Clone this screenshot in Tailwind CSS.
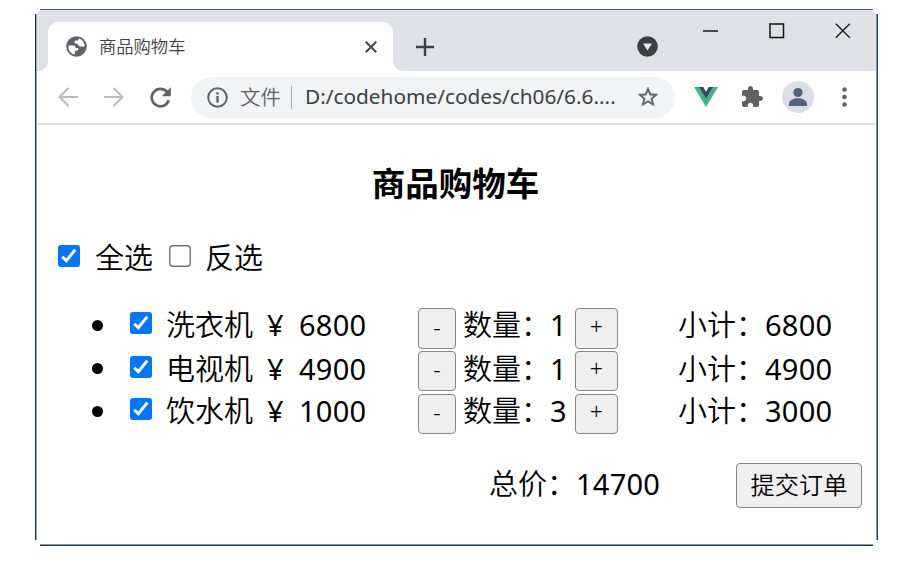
<!DOCTYPE html>
<html lang="zh-CN">
<head>
<meta charset="utf-8">
<title>商品购物车</title>
<script src="https://cdn.jsdelivr.net/npm/@tailwindcss/browser@4"></script>
</head>
<body class="bg-white w-[897px] h-[575px] overflow-hidden pl-[35px] pt-[9px] font-['Noto_Sans','Noto_Sans_CJK_SC',sans-serif] text-black">
<div class="relative w-[843px] h-[537px] flex flex-col px-0.5">
  <!-- window frame -->
  <div class="absolute left-[5px] right-[5px] top-0 h-px bg-[#4f575c]"></div>
  <div class="absolute left-[5px] right-[5px] bottom-0 h-0.5 border-t border-[#8493a0] bg-[#1e4358]"></div>
  <div class="absolute left-0 top-[5px] bottom-[6px] w-0.5 border-r border-[#9aabba] bg-[#16303f]"></div>
  <div class="absolute right-0 top-[5px] bottom-[6px] w-0.5 border-l border-[#7f9aad] bg-[#1d4459]"></div>

  <!-- tab strip -->
  <header class="mt-px h-[61px] shrink-0 flex bg-[#dee1e6] rounded-t-[5px]">
    <div class="w-[11px] flex items-end bg-white"><div class="size-full bg-[#dee1e6] rounded-br-[10px] rounded-tl-[5px]"></div></div>
    <div class="mt-3 w-[345px] rounded-t-[11px] bg-white flex items-center pl-[18px] pr-[16px]">
      <svg class="size-[21px]" viewBox="0 0 21 21"><circle cx="10.5" cy="10.5" r="10.3" fill="#5f6368"/><path d="M2.400 9.600H7c2 0 2.600 1 2.600 2.400h1.800c1.200 0 1.600 2.400 0 2.600-2 0-2.600.6-2.600 2v2C5 18 2 14.600 2.400 9.600zM12.800 2.500c-.2 1.600-1 2.100-2.600 2.100-1.200 0-1.600.6-1.600 1.600 0 1.200.8 1.400 2 1.400 1.600 0 1.600 2.400 3.200 3 1.400.4 2.800-.4 4.800.3C19 6.800 16.400 3.400 12.800 2.500z" fill="#fff"/></svg>
      <span class="ml-3 text-[17.3px] leading-6 text-[#3c4043] font-[350] whitespace-nowrap">商品购物车</span>
      <svg class="ml-auto size-3" viewBox="0 0 12 12" stroke="#4a4d51" stroke-width="2.2"><path d="M.8.8l10.4 10.4M11.2.8L.8 11.2"/></svg>
    </div>
    <div class="flex-1 bg-white"><div class="size-full bg-[#dee1e6] rounded-bl-[10px] rounded-tr-[5px] flex">
      <svg class="ml-[23px] mt-[28px] size-[18px]" viewBox="0 0 18 18" stroke="#3c4043" stroke-width="2.4"><path d="M9 0v18M0 9h18"/></svg>
      <svg class="ml-[203px] mt-[26px] size-[21px]" viewBox="0 0 21 21"><circle cx="10.5" cy="10.5" r="10.3" fill="#3c4043"/><path d="M6 7.5h9l-4.5 7z" fill="#e8eaed"/></svg>
      <svg class="ml-[45px] mt-[20px] w-[15px] h-[2px]" viewBox="0 0 15 2"><path d="M0 1h15" stroke="#222" stroke-width="1.6"/></svg>
      <svg class="ml-[51px] mt-[13px] size-[16px]" viewBox="0 0 16 16"><rect x="1" y="1" width="13.5" height="13.5" fill="none" stroke="#111" stroke-width="1.5"/></svg>
      <svg class="ml-[50px] mt-[13px] size-[16px]" viewBox="0 0 16 16" stroke="#222" stroke-width="1.5"><path d="M.8.8l14 14M14.8.8l-14 14"/></svg>
    </div></div>
  </header>

  <!-- toolbar -->
  <nav class="h-[54px] shrink-0 flex items-center border-b-2 border-[#dfe1e5] pl-[21px] text-[22px]">
    <svg class="size-[20px]" viewBox="0 0 20 20" fill="none" stroke="#babcbe" stroke-width="2.2"><path d="M20 10H1.5M10.5 1L1.5 10l9 9"/></svg>
    <svg class="ml-[26px] size-[20px]" viewBox="0 0 20 20" fill="none" stroke="#babcbe" stroke-width="2.2"><path d="M0 10h18.5M9.500 1l9 9-9 9"/></svg>
    <svg class="ml-[26px] size-[21px]" viewBox="0 0 21 21"><path d="M17.300 5.200A8.700 8.700 0 1 0 18.700 13.300" fill="none" stroke="#5f6368" stroke-width="2.700"/><path d="M20.800.3v9h-9z" fill="#5f6368"/></svg>
    <div class="ml-[20px] w-[484px] h-[41px] rounded-full bg-[#f1f3f4] flex items-center pl-[16px]">
      <svg class="size-[21px] shrink-0" viewBox="0 0 21 21"><circle cx="10.500" cy="10.500" r="9.300" fill="none" stroke="#5f6368" stroke-width="2"/><path d="M10.500 9v6.500M10.500 5.200v2.300" stroke="#5f6368" stroke-width="2.400"/></svg>
      <span class="ml-[12px] w-[51px] shrink-0 text-[20.500px] text-[#5f6368] font-[350] whitespace-nowrap">文件</span>
      <span class="w-px h-[23px] shrink-0 bg-[#a9acb0]"></span>
      <span class="ml-[13px] w-[312px] shrink-0 text-[20.800px] text-[#3c4043] whitespace-nowrap">D:/codehome/codes/ch06/6.6....</span>
      <svg class="ml-[19px] size-[24px] shrink-0" viewBox="0 0 24 24" fill="#5f6368" stroke="#5f6368" stroke-width=".4"><path d="M22 9.240l-7.190-.62L12 2 9.190 8.630 2 9.240l5.460 4.730L5.820 21 12 17.270 18.180 21l-1.630-7.030L22 9.240zM12 15.400l-3.760 2.270 1-4.280-3.320-2.880 4.380-.38L12 6.100l1.710 4.040 4.380.38-3.320 2.880 1 4.280L12 15.400z"/></svg>
    </div>
    <svg class="ml-[19px] w-[24px] h-[20px]" viewBox="0 0 24 20"><path d="M0 0h4.800L12 12 19.200 0H24L12 20z" fill="#41b883"/><path d="M4.800 0h4.400L12 4.800 14.800 0h4.400L12 12z" fill="#35495e"/></svg>
    <svg class="ml-[22px] size-[24px]" viewBox="0 0 24 24" fill="#5f6368"><path d="M20.500 11H19V7c0-1.100-.9-2-2-2h-4V3.500C13 2.120 11.880 1 10.500 1S8 2.120 8 3.500V5H4c-1.100 0-1.990.9-1.990 2v3.800H3.500c1.490 0 2.700 1.210 2.700 2.700s-1.210 2.700-2.700 2.700H2V20c0 1.100.9 2 2 2h3.800v-1.500c0-1.490 1.210-2.700 2.700-2.700 1.490 0 2.700 1.210 2.700 2.700V22H17c1.100 0 2-.9 2-2v-4h1.500c1.380 0 2.500-1.120 2.500-2.500S21.880 11 20.500 11z"/></svg>
    <svg class="ml-[18px] size-[32px]" viewBox="0 0 32 32"><circle cx="16" cy="16" r="16" fill="#dadee5"/><g fill="#56627a"><circle cx="16" cy="11.500" r="4.600"/><path d="M7 25v-2.500c0-3.300 5-5.300 9-5.300s9 2 9 5.300V25z"/></g></svg>
    <svg class="ml-[28px] w-[5px] h-[20px]" viewBox="0 0 5 20" fill="#5f6368"><circle cx="2.500" cy="2.500" r="2.300"/><circle cx="2.500" cy="10" r="2.300"/><circle cx="2.500" cy="17.500" r="2.300"/></svg>
  </nav>

  <!-- page -->
  <main class="flex-1 text-[29px] leading-[42px] tracking-[0.25px] whitespace-nowrap">
    <h1 class="mt-[37px] pr-0.5 text-center font-bold text-[33.500px] leading-[42px] tracking-normal">商品购物车</h1>
    <div class="mt-[32px] h-[44px] flex items-center pl-[21px] font-[350] tracking-normal">
      <svg class="size-[22px] -mt-1" viewBox="0 0 22 22"><rect width="22" height="22" rx="3" fill="#0075ff"/><path d="M4.300 11.700l4 4L17.300 4.600" fill="none" stroke="#fff" stroke-width="3"/></svg>
      <span class="ml-[15px] w-[58px]">全选</span>
      <svg class="ml-[16px] size-[22px] -mt-1" viewBox="0 0 22 22"><rect x=".8" y=".8" width="20.400" height="20.400" rx="3" fill="#fff" stroke="#767676" stroke-width="1.500"/></svg>
      <span class="ml-[14px]">反选</span>
    </div>
    <ul class="mt-[23px]">
      <li class="h-[44px] flex items-center pl-[55px]">
        <span class="size-[11px] rounded-full bg-black"></span>
        <svg class="ml-[27px] size-[22px] -mt-1" viewBox="0 0 22 22"><rect width="22" height="22" rx="3" fill="#0075ff"/><path d="M4.300 11.700l4 4L17.300 4.600" fill="none" stroke="#fff" stroke-width="3"/></svg>
        <span class="ml-[14px] w-[101px] font-[350] tracking-normal">洗衣机</span><span class="w-[32px]">¥</span><span class="w-[119px]">6800</span>
        <button class="w-[38px] h-[41px] mt-1.5 pb-0.5 border-[1.500px] border-[#858585] rounded-[4px] bg-[#efefef] text-[23px] font-light leading-none">-</button>
        <span class="ml-[7px] w-[87px] font-[350] tracking-normal">数量：</span><span class="w-[25px]">1</span>
        <button class="w-[43px] h-[41px] mt-1.5 pb-1 border-[1.500px] border-[#858585] rounded-[4px] bg-[#efefef] text-[23px] font-light leading-none">+</button>
        <span class="ml-[60px] w-[87px] font-[350] tracking-normal">小计：</span><span>6800</span>
      </li>
      <li class="h-[43px] flex items-center pl-[55px]">
        <span class="size-[11px] rounded-full bg-black"></span>
        <svg class="ml-[27px] size-[22px] -mt-1" viewBox="0 0 22 22"><rect width="22" height="22" rx="3" fill="#0075ff"/><path d="M4.300 11.700l4 4L17.300 4.600" fill="none" stroke="#fff" stroke-width="3"/></svg>
        <span class="ml-[14px] w-[101px] font-[350] tracking-normal">电视机</span><span class="w-[32px]">¥</span><span class="w-[119px]">4900</span>
        <button class="w-[38px] h-[40px] mt-1 pb-0.5 border-[1.500px] border-[#858585] rounded-[4px] bg-[#efefef] text-[23px] font-light leading-none">-</button>
        <span class="ml-[7px] w-[87px] font-[350] tracking-normal">数量：</span><span class="w-[25px]">1</span>
        <button class="w-[43px] h-[40px] mt-1 pb-1 border-[1.500px] border-[#858585] rounded-[4px] bg-[#efefef] text-[23px] font-light leading-none">+</button>
        <span class="ml-[60px] w-[87px] font-[350] tracking-normal">小计：</span><span>4900</span>
      </li>
      <li class="h-[42px] flex items-center pl-[55px]">
        <span class="size-[11px] rounded-full bg-black"></span>
        <svg class="ml-[27px] size-[22px] -mt-1" viewBox="0 0 22 22"><rect width="22" height="22" rx="3" fill="#0075ff"/><path d="M4.300 11.700l4 4L17.300 4.600" fill="none" stroke="#fff" stroke-width="3"/></svg>
        <span class="ml-[14px] w-[101px] font-[350] tracking-normal">饮水机</span><span class="w-[32px]">¥</span><span class="w-[119px]">1000</span>
        <button class="w-[38px] h-[40px] mt-1.5 pb-1 border-[1.500px] border-[#858585] rounded-[4px] bg-[#efefef] text-[23px] font-light leading-none">-</button>
        <span class="ml-[7px] w-[87px] font-[350] tracking-normal">数量：</span><span class="w-[25px]">3</span>
        <button class="w-[43px] h-[40px] mt-1.5 pb-1.5 border-[1.500px] border-[#858585] rounded-[4px] bg-[#efefef] text-[23px] font-light leading-none">+</button>
        <span class="ml-[60px] w-[87px] font-[350] tracking-normal">小计：</span><span>3000</span>
      </li>
    </ul>
    <div class="mt-[31px] flex justify-end items-center pr-[14px]">
      <span class="-mt-[3px] w-[87px] font-[350] tracking-normal">总价：</span><span class="-mt-[3px] w-[160px]">14700</span>
      <button class="w-[126px] h-[45px] border-[1.500px] border-[#858585] rounded-[4px] bg-[#efefef] text-[24.200px] leading-none font-[350] tracking-normal">提交订单</button>
    </div>
  </main>
</div>
</body>
</html>
